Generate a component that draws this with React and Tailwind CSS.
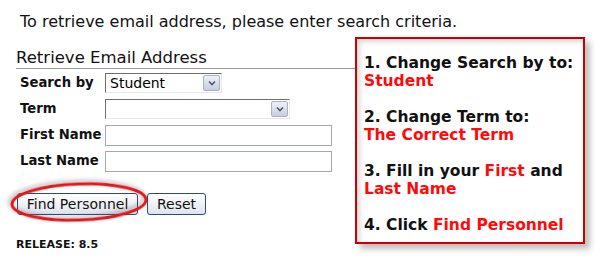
import React from "react";

function FakeSelect({ width, value }) {
  return (
    <div
      className="flex items-center h-[20px] bg-white border border-t-[#6e6e6e] border-l-[#6e6e6e] border-r-[#e8e8e8] border-b-[#e8e8e8]"
      style={{ width }}
    >
      <span className="flex-1 pl-[4px] text-[14px] leading-none text-black">{value}</span>
      <span className="mr-[1px] flex items-center justify-center w-[17px] h-[16px] rounded-[2px] border border-[#a8b2c4] bg-gradient-to-b from-[#eef1f7] to-[#c7cedd]">
        <svg width="8" height="6" viewBox="0 0 8 6">
          <path d="M1 1.5 L4 4.5 L7 1.5" fill="none" stroke="#4d5a70" strokeWidth="1.6" />
        </svg>
      </span>
    </div>
  );
}

function Field({ label, children }) {
  return (
    <div className="flex items-center h-[26px]">
      <span className="w-[89px] shrink-0 whitespace-nowrap pl-[4px] text-[13.2px] font-bold text-[#111]">
        {label}
      </span>
      {children}
    </div>
  );
}

export default function App() {
  return (
    <div className="relative w-[604px] h-[265px] bg-white overflow-hidden font-['DejaVu_Sans',Verdana,sans-serif]">
      <p className="pl-[20px] pt-[12px] h-[37px] text-[16px] leading-[19px] text-[#111]">
        To retrieve email address, please enter search criteria.
      </p>

      <div className="flex items-start">
        <div className="relative w-[339px] ml-[16px]">
          <h2 className="mt-[11px] pb-[1px] text-[16.5px] leading-[19px] text-[#111] border-b border-[#9a9a9a]">
            Retrieve Email Address
          </h2>
          <div className="mt-[1px]">
            <Field label="Search by">
              <FakeSelect width={117} value="Student" />
            </Field>
            <Field label="Term">
              <FakeSelect width={185} value="" />
            </Field>
            <Field label="First Name">
              <div className="w-[227px] h-[21px] border border-[#a4a9ad] bg-white" />
            </Field>
            <Field label="Last Name">
              <div className="w-[227px] h-[21px] border border-[#a4a9ad] bg-white" />
            </Field>
          </div>

          <div className="flex gap-[9px] mt-[19px] ml-[1px]">
            <button className="h-[22px] w-[121px] rounded-[3px] border border-[#2b4a75] bg-gradient-to-b from-white to-[#dfe3ee] text-[14px] text-[#111]">
              Find Personnel
            </button>
            <button className="h-[22px] w-[59px] rounded-[3px] border border-[#2b4a75] bg-gradient-to-b from-white to-[#dfe3ee] text-[14px] text-[#111]">
              Reset
            </button>
          </div>

          <svg className="absolute left-[-16px] top-[138px]" width="160" height="50" viewBox="0 0 160 50">
            <defs>
              <filter id="sh" x="-20%" y="-40%" width="140%" height="180%">
                <feDropShadow dx="-2" dy="-2" stdDeviation="2" floodColor="#555" floodOpacity="0.45" />
              </filter>
            </defs>
            <ellipse
              cx="79"
              cy="27"
              rx="67"
              ry="18"
              transform="rotate(-2 79 27)"
              fill="none"
              stroke="#e3161c"
              strokeWidth="3"
              filter="url(#sh)"
            />
          </svg>

          <p className="mt-[22px] text-[11px] font-bold text-[#111]">RELEASE: 8.5</p>
        </div>

        <div className="w-[230px] h-[207px] border-2 border-[#c80000] bg-white pl-[7px] pt-[15px] shadow-[5px_5px_6px_rgba(0,0,0,0.25),inset_3px_3px_5px_rgba(0,0,0,0.15)] text-[15.5px] leading-[18px] font-bold text-[#111]">
          <p>1. Change Search by to:</p>
          <p className="text-[#ff0a0a]">Student</p>
          <p>&nbsp;</p>
          <p>2. Change Term to:</p>
          <p className="text-[#ff0a0a]">The Correct Term</p>
          <p>&nbsp;</p>
          <p>
            3. Fill in your <span className="text-[#ff0a0a]">First</span> and
          </p>
          <p className="text-[#ff0a0a]">Last Name</p>
          <p>&nbsp;</p>
          <p>
            4. Click <span className="text-[#ff0a0a]">Find Personnel</span>
          </p>
        </div>
      </div>
    </div>
  );
}
